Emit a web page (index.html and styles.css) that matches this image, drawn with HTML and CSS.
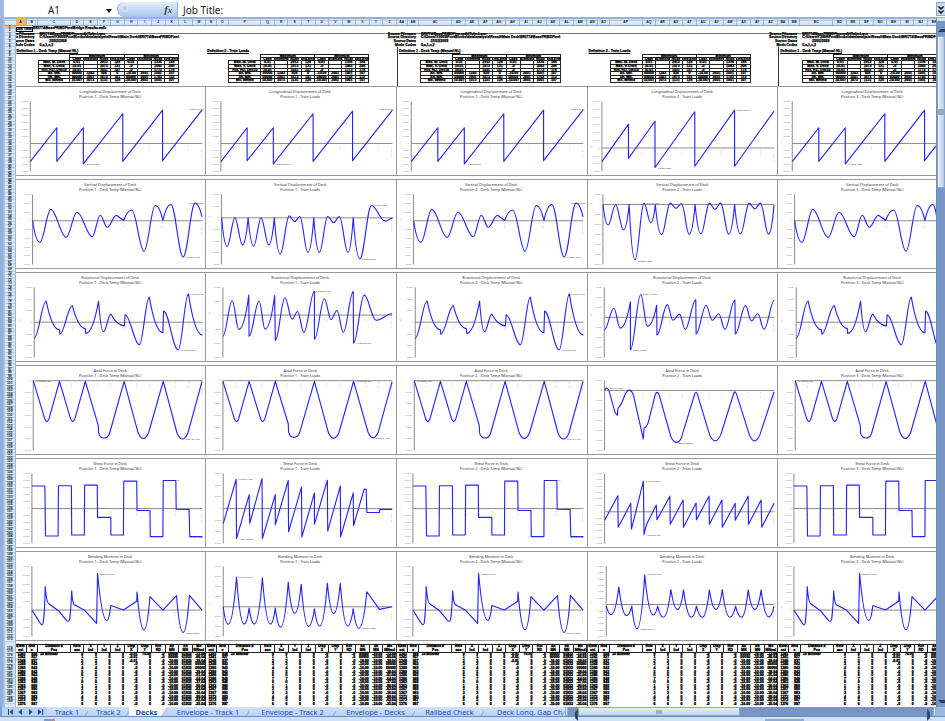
FILE: index.html
```html
<!DOCTYPE html>
<html lang="en">
<head>
  <meta charset="UTF-8">
  <title>Decks</title>
  <link rel="stylesheet" href="styles.css">
</head>
<body>
  <div class="formula-bar">
    <div class="name-box">A1</div>
    <span class="arrow-down"></span>
    <div class="fx-pill"><i class="knob"></i><span class="fx">f<small>x</small></span></div>
    <div class="formula">Job Title:</div>
    <div class="expand">
      <svg width="8" height="10" viewBox="0 0 8 10"><path d="M1.5 1.5 4 4 6.500 1.500M1.500 5.500 4 8 6.500 5.500" fill="none" stroke="#111" stroke-width="1.500"/></svg>
    </div>
  </div>

  <div class="workbook">
    <div class="left-edge"></div>
    <div class="grid">
      <div class="col-heads" id="cols"><div class="corner"></div></div>
      <div class="grid-body">
        <div class="row-heads" id="rows"></div>
        <div class="sheet" id="sheet"></div>
      </div>
    </div>
    <div class="vscroll">
      <div class="split"></div>
      <div class="up"></div>
      <div class="thumb"><i></i></div>
      <div class="track"></div>
      <div class="down"></div>
    </div>
  </div>

  <div class="bottom">
    <div class="nav">
      <svg width="38" height="8" viewBox="0 0 38 8" fill="#1c4a9c">
        <path d="M1 1h1v6H1zM6 1v6L2.500 4zM15 1v6l-3.500-3zM22 1v6l3.500-3zM31 1v6l3.500-3zM35 1h1v6h-1z"/>
      </svg>
    </div>
    <div class="tabs">
      <span class="tab t1">Track 1</span>
      <span class="tab t2">Track 2</span>
      <span class="tab active">Decks</span>
      <span class="tab t4">Envelope - Track 1</span>
      <span class="tab t5">Envelope - Track 2</span>
      <span class="tab t6">Envelope - Decks</span>
      <span class="tab t7">Railbed Check</span>
      <span class="tab t8">Deck Long. Gap Ch</span>
    </div>
    <div class="hscroll">
      <div class="grip"></div>
      <div class="left"></div>
      <div class="thumb"><i></i></div>
      <div class="right"></div>
      <div class="grip"></div>
    </div>
    <div class="corner-fill"></div>
  </div>
  <div class="status">
    <div class="record"></div>
    <div class="views"></div>
  </div>
  <script src="sheet.js"></script>
</body>
</html>
```
FILE: styles.css
```css
* {
  box-sizing: border-box;
}
body {
  --row: 3.577px;
  margin: 0;
  width: 945px;
  height: 721px;
  overflow: hidden;
  background: #fff;
  font-family: "Liberation Sans", Arial, sans-serif;
}

/* formula bar */
.formula-bar {
  display: flex;
  height: 18px;
  padding-top: 2px;
  border-bottom: 1px solid #9db9d8;
  font: 10px/16px "Noto Sans", sans-serif;
  color: #222;
  border-left: 4px solid #9dbbe3;
}
.name-box {
  width: 102px;
  padding-right: 2px;
  text-align: center;
}
.arrow-down {
  width: 6px;
  height: 4px;
  margin: 7px 5px 0 0;
  border: 3px solid transparent;
  border-top: 4px solid #111;
  border-bottom: 0;
}
.fx-pill {
  display: flex;
  justify-content: space-between;
  width: 61px;
  height: 15px;
  padding: 0 5px 0 3px;
  border-radius: 8px 0 0 8px;
  border-left: 1px solid #8fb0dc;
  border-right: 1px solid #8fb0dc;
  background: linear-gradient(#e3eefb, #c4daf5 50%, #a5c4ec);
}
.knob {
  width: 7px;
  height: 7px;
  margin-top: 3px;
  border-radius: 50%;
  background: #c4ccd8;
  border: 1px solid #e8eef6;
}
.fx {
  font: italic bold 11px/14px "Liberation Serif", serif;
  color: #444;
}
.fx small {
  font-size: 8px;
}
.formula {
  flex: 1;
  padding-left: 5px;
}
.expand {
  width: 9px;
  height: 14px;
  padding-top: 2px;
  background: #c5daf4;
  border: 1px solid #89a9d3;
  border-right: 0;
}
.expand svg {
  display: block;
}

/* grid */
.workbook {
  display: flex;
  height: 688.5px;
}
.left-edge {
  width: 5px;
  background: linear-gradient(90deg, #8fb0dd 50%, #b7cfee);
}
.grid {
  width: 931px;
  overflow: hidden;
}
.col-heads {
  display: flex;
  height: 7.7px;
  background: linear-gradient(#8aadd3 0 1px, #dbe9f7 1px 2px, #a9c6e2 2px 3px, #e4eef9 3px, #cbdff3);
  border-bottom: 1px solid #86a8cb;
}
.corner {
  flex: none;
  width: 10.5px;
}
.col-head {
  flex: none;
  padding-top: 2px;
  border-right: 1px solid #9ab8d8;
  font-size: 3.4px;
  font-weight: bold;
  line-height: 5px;
  text-align: center;
  color: #123;
}
.col-head.on,
.row-head.on {
  background: #f7b55a;
}
.grid-body {
  display: flex;
  height: 681px;
}
.row-heads {
  flex: none;
  width: 10.5px;
  background: #d9e7f7;
  border-right: 1px solid #9ab8d8;
}
.row-head {
  height: var(--row);
  border-bottom: 1px solid #b3cdea;
  font-size: 3.3px;
  font-weight: bold;
  line-height: var(--row);
  text-align: center;
  color: #012;
}
.row-head.tall {
  height: 8.4px;
  line-height: 13px;
}
.sheet {
  display: flex;
  width: 920px;
  overflow: hidden;
  background: linear-gradient(#777, #777) 0 7px / 100% 1px no-repeat;
}
.block {
  flex: none;
  width: 190.7px;
}

/* job details and result summary */
.head {
  height: calc(var(--row) * 17);
  font-size: 3.5px;
  font-weight: bold;
  line-height: var(--row);
  white-space: nowrap;
  -webkit-text-stroke: 0.25px #000;
}
.job {
  display: flex;
  height: calc(var(--row) * 2);
  padding-top: 1px;
}
.job b {
  height: 5px;
  border: 1px solid #000;
  line-height: 3px;
}
.info {
  display: grid;
  grid-template-columns: 19px 1fr;
  grid-auto-rows: var(--row);
  column-gap: 5px;
  height: calc(var(--row) * 4);
}
.info span:nth-child(odd) {
  display: flex;
  justify-content: flex-end;
}
.caption {
  height: calc(var(--row) * 2);
  padding: 3px 0 0 1px;
  text-decoration: underline;
}
.ruled .caption {
  border-left: 1px solid #333;
}
.ruled .summary-wrap {
  border-left: 1px solid #333;
}
.summary-wrap {
  height: calc(var(--row) * 9);
  padding-left: 22.3px;
}
.summary {
  display: grid;
  grid-template-columns: 32.7px repeat(8, 13.54px);
  grid-auto-rows: var(--row);
  width: 141.5px;
}
.summary span {
  border-right: 1px solid #222;
  border-bottom: 1px solid #222;
  text-align: center;
}
.summary .group {
  grid-column: span 4;
  border-top: 1px solid #222;
  line-height: 2.5px;
}
.summary .blank {
  border-bottom: 0;
}
.summary .name {
  border-left: 1px solid #222;
}

/* charts */
.chart {
  display: block;
  width: 190.7px;
  height: 89.4px;
  margin-bottom: 3.6px;
  border: 1px solid #999;
  border-left: 0;
}
.chart text {
  font-family: "Noto Sans", sans-serif;
  font-size: 6px;
  fill: #999;
}
.chart .title {
  font-size: 11.5px;
  text-anchor: middle;
  fill: #333;
}
.chart .peak {
  font-size: 6.5px;
  fill: #333;
}
.chart .tick {
  text-anchor: end;
}
.chart .axis {
  stroke: #888;
  stroke-width: 3;
}
.chart .line {
  fill: none;
  stroke: #2424ff;
  stroke-width: 3.4;
  stroke-linejoin: round;
}

/* results */
.results {
  display: grid;
  grid-template-columns: 11px 11.6px 32.7px repeat(10, 13.54px);
  grid-template-rows: 8.4px;
  grid-auto-rows: var(--row);
  font-size: 3.5px;
  font-weight: bold;
  line-height: var(--row);
  text-align: right;
  border-right: 1px solid #444;
  -webkit-text-stroke: 0.3px #000;
}
.results span {
  white-space: nowrap;
  padding-right: 1px;
}
.results .th {
  padding: 0;
  border: 1px solid #222;
  border-left: 0;
  line-height: 3.2px;
  text-align: center;
  white-space: pre;
}
.results .txt {
  text-align: left;
  padding-left: 2px;
}

/* vertical scroll bar */
.vscroll {
  display: flex;
  flex-direction: column;
  width: 9px;
  background: #7796c5;
  border-left: 1px solid #6b8dbd;
}
.vscroll .split {
  height: 3px;
  background: #cfe0f5;
}
.vscroll .up,
.vscroll .down {
  flex: none;
  height: 15px;
  padding: 8px 0 0 1px;
}
.vscroll .up::before,
.vscroll .down::before {
  content: "";
  display: block;
  width: 6px;
  border: 3px solid transparent;
  border-top: 0;
  border-bottom: 3px solid #2f4263;
}
.vscroll .down::before {
  border-bottom: 0;
  border-top: 3px solid #2f4263;
}
.vscroll .thumb {
  display: flex;
  align-items: center;
  height: 152px;
  background: linear-gradient(90deg, #eaf2fc, #b5cae6);
  border: 1px solid #88a5cf;
}
.vscroll .thumb i {
  width: 6px;
  height: 6px;
  background: #9ba9bd;
}
.vscroll .track {
  flex: 1;
}

/* sheet tabs */
.bottom {
  display: flex;
  height: 10.5px;
  background: #b8d1f2;
  border-bottom: 1px solid #6b8fc4;
}
.nav {
  width: 46px;
  padding: 1px 0 0 5px;
  border-left: 2px solid #7ba0d4;
}
.nav svg {
  display: block;
}
.tabs {
  display: flex;
  width: 519px;
  overflow: hidden;
  font: 7.4px/10px "Noto Sans", sans-serif;
  color: #24509b;
  white-space: nowrap;
}
.tab {
  flex: none;
  position: relative;
  text-align: center;
  background: linear-gradient(#cfe1f8, #b9d2f3);
}
.tab::after {
  content: "";
  position: absolute;
  right: 0;
  top: 0;
  width: 1px;
  height: 10px;
  background: #88a9d6;
  transform: skewX(-32deg);
}
.tab.active {
  width: 38px;
  padding-right: 3px;
  background: #fff;
  font-weight: bold;
  clip-path: polygon(0 0, 100% 0, 84% 100%, 0 100%);
}
.t1 { width: 42px; }
.t2 { width: 41px; }
.t4 { width: 82px; }
.t5 { width: 87px; }
.t6 { width: 79px; }
.t7 { width: 69px; }
.t8 { width: 81px; padding-left: 13px; }
.tab.t8 { text-align: left; }

.hscroll {
  display: flex;
  width: 371px;
  background: #7796c5;
}
.hscroll .grip {
  width: 3px;
  background: #dce9fa;
  border: 1px solid #8fadd7;
}
.hscroll .left,
.hscroll .right {
  width: 10px;
  padding: 2px 0 0 4px;
}
.hscroll .left::before,
.hscroll .right::before {
  content: "";
  display: block;
  width: 3px;
  height: 6px;
  border: 3px solid transparent;
  border-left: 0;
  border-right: 3px solid #33486d;
}
.hscroll .right {
  margin-left: auto;
}
.hscroll .right::before {
  border-right: 0;
  border-left: 3px solid #33486d;
}
.hscroll .thumb {
  display: flex;
  justify-content: center;
  width: 162px;
  background: linear-gradient(#e6effa, #c0d2eb);
  border: 1px solid #8aa7d0;
}
.hscroll .thumb i {
  width: 6px;
  height: 4px;
  margin-top: 2px;
  background: #a4b0c2;
}
.corner-fill {
  flex: 1;
  background: #9bb8e0;
}

/* status bar */
.status {
  display: flex;
  justify-content: space-between;
  height: 4px;
  padding: 2px 141px 0 44px;
  background: #cfe1f7;
}
.status .record {
  width: 11px;
  background: linear-gradient(90deg, #7d9cc9 50%, #d88b7a);
}
.status .views {
  width: 39px;
  background: linear-gradient(90deg, #efc16c 13px, #dfeafa 13px);
  border: 1px solid #8fadd7;
}
```
FILE: sheet.js
```js
var COLS = [11, 11.6, 32.7, 13.54, 13.54, 13.54, 13.54, 13.54, 13.54, 13.54, 13.54, 13.54, 13.54];

// Curves use M, L and Q as in SVG, plus three eased segments:
// S flat at both ends, A flat on arrival, D flat on departure.
var TEMP = [
  { title: 'Longitudinal Displacement of Deck', w: 185, o: [47, 9], x: 90, zero: 182, steps: 10, unit: 'm',
    d: 'M90,238 L170,134 L170,237 L250,134 L250,245 L369,91 L369,237 L489,80 L489,235 L608,79',
    peaks: [[258, 249, '-0.005919231'], [570, 81, '0.009478154']] },
  { title: 'Vertical Displacement of Deck', w: 158, o: [47, 287], x: 97, zero: 412, steps: 8, unit: 'm',
    d: 'M97,412 A119,478 S152,377 S198,463 S231,386 S277,461 S301,395 S322,432 S350,395 L372,411 A396,379 S433,505 S467,365 D490,411 A514,362 S551,523 S587,358 D608,400',
    peaks: [[557, 525, '-0.00021E-05'], [570, 360, '0.000105E-05']] },
  { title: 'Rotational Displacement of Deck', w: 174, o: [47, 15], x: 102, zero: 166, steps: 6, unit: 'rad',
    d: 'M102,215 S138,101 A178,189 L179,203 S217,115 A256,185 L257,200 D296,101 A311,195 S333,141 A374,177 L376,143 S419,235 S449,89 A490,198 L492,132 S536,251 S567,79 A609,205',
    peaks: [[543, 253, '-0.77335E-05'], [569, 81, '4.78336E-05']] },
  { title: 'Axial Force in Deck', w: 100, o: [47, 293], x: 99, zero: 338, steps: 6, unit: 'N',
    d: 'M99,338 L133,453 Q140,474 147,453 L178,340 L211,453 Q218,474 225,453 L256,340 L295,475 L296,498 Q300,514 312,514 Q324,514 329,500 L373,340 L415,497 Q431,534 447,497 L491,340 L533,500 Q549,534 565,500 L608,340',
    peaks: [[107, 343, '-0.0002E-05'], [557, 519, '-250136.975']] },
  { title: 'Shear Force in Deck', w: 102, o: [47, 11], x: 95, zero: 163, steps: 10, unit: 'N',
    d: 'M95,94 L134,94 L136,247 L174,247 L175,93 L214,93 L215,244 L253,244 L254,91 L292,91 L293,190 L333,190 L333,244 L371,244 L372,79 L411,79 L412,169 L451,169 L452,249 L490,249 L491,77 L529,77 L530,165 L569,166 L571,249 L609,249',
    peaks: [[497, 80, '398023.0151'], [565, 252, '-40151.02']] },
  { title: 'Bending Moment in Deck', w: 134, o: [47, 290], x: 95, zero: 468, steps: 8, unit: 'Nm',
    d: 'M95,468 L118,505 Q125,520 129,508 Q134,470 135,396 Q139,445 145,448 L175,470 L198,498 Q206,508 209,495 Q213,460 215,409 Q217,447 223,452 L253,468 L290,509 L293,355 A321,500 D333,454 L371,468 L411,441 L412,413 A433,529 D451,427 L490,468 L531,424 A551,537 D570,423 L608,468',
    peaks: [[300, 360, '83092E-0.537'], [557, 540, '-532976.0562']] }
];

var TRAIN1 = [
  { o: [3, 9], x: 48, zero: 182, steps: 10,
    d: 'M48,238 L127,134 L127,235 L206,134 L206,245 L326,91 L326,237 L445,83 L445,235 L565,80',
    peaks: [[213, 249, '-0.005923919'], [526, 81, '0.009399154']] },
  { o: [3, 287], x: 50, zero: 403, steps: 6,
    d: 'M50,403 A67,491 S90,403 S113,486 D130,403 A147,490 S169,403 S192,486 D209,403 A227,514 S254,397 S270,415 S286,399 S310,509 D328,403 A345,509 S370,399 S388,418 S405,399 S431,509 D447,403 A467,529 S502,365 S543,413 S566,404',
    peaks: [[471, 532, '-0.000751525'], [505, 367, '0.000516506']] },
  { o: [619, 15], x: 670, zero: 144, steps: 5,
    d: 'M670,209 S698,100 S718,188 D748,83 L749,209 S779,101 S797,187 D826,84 L828,222 S857,91 S879,157 S895,133 S914,197 S946,71 L946,218 S976,94 S996,158 S1014,130 S1033,197 S1063,72 L1064,230 S1096,83 S1132,160 S1180,140',
    peaks: [[949, 73, '0.00029E-05'], [1072, 232, '-0.00029E-05']] },
  { o: [619, 293], x: 670, zero: 338, steps: 6,
    d: 'M670,340 L704,453 Q711,474 718,453 L749,340 L783,453 Q790,474 797,453 L828,340 L867,470 L868,495 Q872,512 884,512 Q896,512 902,495 L946,340 L988,497 Q1004,532 1020,497 L1064,340 L1108,497 Q1122,530 1138,497 L1180,342',
    peaks: [[1072, 343, '-0.0002E-05'], [1128, 517, '-250036.775']] },
  { o: [619, 11], x: 671, zero: 163, steps: 6,
    d: 'M671,209 L710,73 L711,255 L749,121 L751,208 L788,71 L789,255 L828,120 L828,213 L867,77 L868,234 L907,97 L908,250 L946,115 L946,211 L985,76 L986,232 L1024,94 L1025,250 L1063,115 L1064,215 L1096,103 L1102,104 L1104,175 L1142,175 L1143,166 L1180,166',
    peaks: [[715, 75, '1275679.205'], [717, 259, '-1309125.989']] },
  { o: [619, 290], x: 671, zero: 458, steps: 7,
    d: 'M671,458 A686,512 D711,367 A734,511 D749,462 A765,511 D789,369 A813,511 D828,462 A844,520 D867,383 A887,478 D906,389 A928,518 D946,464 A962,517 D985,386 A1004,479 D1024,386 A1046,517 D1063,464 A1080,524 D1104,412 L1142,466 L1180,458',
    peaks: [[717, 370, '7969697.215'], [1087, 527, '-5037513.806']] }
];

var TRAIN2 = [
  { o: [8, 9], x: 50, zero: 196, steps: 9,
    d: 'M50,238 L130,123 L130,228 L210,114 L210,256 L330,85 L330,252 L450,80 L450,252 L569,83',
    peaks: [[217, 260, '-0.005129084'], [455, 82, '0.009767654']] },
  { o: [8, 287], x: 53, zero: 362, steps: 7,
    d: 'M53,362 A69,425 S91,363 S115,440 D132,362 A150,532 S177,358 S197,418 D211,362 A230,455 S256,358 S273,374 S290,359 S313,454 D331,362 A349,452 S374,358 S391,377 S408,358 S432,453 D450,362 A468,452 S494,358 S511,376 S528,358 S552,453 D569,364',
    peaks: [[157, 537, '-0.002217525'], [177, 361, '0.0742E-05']] },
  { o: [8, 15], x: 57, zero: 151, steps: 7,
    d: 'M57,190 S86,123 S105,184 D136,103 L136,251 S167,81 S187,178 D215,114 L216,205 S247,112 S264,160 S284,141 S301,188 S333,97 L334,202 S364,114 S383,160 S402,140 S421,188 S451,98 L452,202 S483,115 S501,162 S520,140 S539,188 S570,98',
    peaks: [[141, 253, '-0.000163607'], [172, 83, '0.000114075']] },
  { o: [8, 293], x: 58, zero: 368, steps: 7,
    d: 'M58,366 Q66,355 71,368 L90,437 L97,444 L98,423 Q108,415 119,382 Q133,352 145,382 L170,495 L175,517 L177,483 Q185,480 190,465 L211,380 Q216,368 222,380 L258,510 Q273,542 289,515 L330,378 Q334,368 338,380 L375,505 Q392,540 408,505 L448,375 Q452,368 456,380 L495,505 Q510,540 526,505 L569,372',
    peaks: [[71, 365, '150796.0301'], [279, 532, '-5207793.005']] },
  { o: [8, 11], x: 58, zero: 173, steps: 11,
    d: 'M58,199 L98,124 L99,220 L137,147 L139,226 L175,79 L177,243 Q182,215 190,200 L214,152 L216,197 L255,125 L256,211 L295,137 L296,220 L334,146 L335,197 L373,125 L374,211 L412,137 L413,220 L452,147 L452,199 L491,125 L492,211 L530,137 L532,220 L569,147',
    peaks: [[182, 81, '2407975.256'], [183, 247, '-1807725.756']] },
  { o: [8, 290], x: 63, zero: 451, steps: 11,
    d: 'M63,455 A78,482 D101,397 A124,485 D140,456 A156,525 D179,360 A205,483 D218,456 A235,490 D258,405 A278,466 D296,406 A320,490 D335,456 A353,490 D374,406 A394,466 D413,405 A436,490 D453,456 A471,490 D491,406 A511,466 D530,406 A553,489 D569,456',
    peaks: [[164, 530, '-3528602.515'], [184, 362, '4752202.753']] }
];

function curve(spec) {
  var x = 0, y = 0, out = '';
  spec.match(/[A-Z][\d.,\- ]+/g).forEach(function (seg) {
    var n = seg.slice(1).trim().split(/[ ,]+/).map(Number);
    var c = seg[0], px = n[n.length - 2], py = n[n.length - 1];
    var dx = px - x, dy = py - y;
    if (c === 'S') {
      out += 'C' + [x + dx * 0.37, y, px - dx * 0.37, py, px, py];
    } else if (c === 'A') {
      out += 'C' + [x + dx * 0.25, y + dy * 0.55, x + dx * 0.6, py, px, py];
    } else if (c === 'D') {
      out += 'C' + [px - dx * 0.6, y, px - dx * 0.25, py - dy * 0.55, px, py];
    } else {
      out += c + n;
    }
    x = px;
    y = py;
  });
  return out;
}

function chart(c, i, position) {
  var base = TEMP[i];
  var ox = c.o[0], oy = c.o[1];
  var zero = c.zero - oy, ax = c.x - ox, right = 562;
  var top = 44, bottom = 259, t, k;
  var s = '<svg class="chart" viewBox="0 0 572 268" preserveAspectRatio="none">';
  s += '<text class="title" x="284" y="18" textLength="' + base.w + '">' + base.title + '</text>';
  s += '<text class="title" x="284" y="34" textLength="' + (/Temp/.test(position) ? 188 : 120) + '">' + position + '</text>';
  for (k = 0; k <= c.steps; k++) {
    t = top + (bottom - top) * k / c.steps;
    s += '<text class="tick" x="' + (ax - 7) + '" y="' + (t + 2) + '">' + (Math.abs(t - zero) < 5 ? '0' : '0.0000') + '</text>';
  }
  for (k = 1; k < 13; k++) {
    t = ax + (right - ax) * k / 13;
    s += '<text transform="translate(' + t + ' ' + (zero + 24) + ') rotate(-90)">Pier ' + k + '</text>';
  }
  s += '<text transform="translate(' + right + ' ' + (zero + 42) + ') rotate(-90)">Abutment 2</text>';
  s += '<text transform="translate(13 ' + zero + ') rotate(-90)">' + base.unit + '</text>';
  s += '<path class="axis" d="M' + ax + ',' + top + 'V' + bottom + 'M' + ax + ',' + zero + 'H' + right + '"/>';
  s += '<g transform="translate(' + -ox + ' ' + -oy + ')"><path class="line" d="' + curve(c.d) + '"/>';
  c.peaks.forEach(function (p) {
    s += '<text class="peak" x="' + p[0] + '" y="' + p[1] + '" textLength="44">' + p[2] + '</text>';
  });
  return s + '</g></svg>';
}

function cell(text, cls) {
  return '<span' + (cls ? ' class="' + cls + '"' : '') + '>' + text + '</span>';
}

var SUMMARY = [
  ['Max. M. Deck', '0.01', '', '2913', '128', '0.01', '', '1336', '188'],
  ['Max. V. Deck', '10.01', '', '1073', '131', '-0', '', '1083', '208'],
  ['Rot. RD. Dec10', '10.01', '', '1031', '157', '-0', '', '1773', '178'],
  ['Ax. MN.', '00000', '1243', '928', '0', '-10.00', '2601', '1001', '107'],
  ['Sh. MN.', '00000', '1001', '1673', '101', '00000', '2601', '1703', '112'],
  ['Mo. MNmd', '10.007', '1073', '1131', '128', '-10.007', '2601', '1001', '107']
];

function head(n) {
  var train = n % 2 === 1;
  var s = '<div class="head' + (train || n === 0 ? '' : ' ruled') + '"><div class="job">';
  if (n === 0) {
    s += '<b>Job Title:</b>BRI774\\BaseFRIBDFine\\Bridge Results.mdb';
  }
  s += '</div><div class="info">';
  if (!train) {
    s += cell('Source Filename') + cell('BRI774\\BaseFRIBDFine.mdb\\Tulin.Lanc') +
      cell('Source Directory') + cell('C:\\Users\\Y2009\\FootBlocks\\data\\analysis\\Result\\Main Deck\\BRI774\\BaseFRIBDFine\\') +
      cell('Source Dates') + cell('&emsp;&emsp;&ensp; 25/02/2009') +
      cell('Mode Codes') + cell('0,a,1,c,2');
  }
  s += '</div><div class="caption">' + (train ? 'Definition 2 - Train Loads' : 'Definition 1 - Deck Temp (Manual NL)') + '</div>';
  s += '<div class="summary-wrap"><div class="summary">' + cell('', 'blank') + cell('Maximum', 'group') + cell('Minimum', 'group') + cell('');
  ['Case', 'Element', 'Node', 'Ind.End', 'Case', 'Element', 'Node', 'Ind.End'].forEach(function (h) {
    s += cell(h);
  });
  SUMMARY.forEach(function (r) {
    r.forEach(function (v, j) {
      s += cell(v, j ? '' : 'name');
    });
  });
  return s + '</div></div></div>';
}

var NODES = [[1341, 928], [1341, 927], [1348, 937], [1348, 943], [1380, 943], [1380, 943], [1386, 943], [1386, 948],
  [1363, 948], [1363, 980], [1367, 980], [1367, 983], [1373, 983], [1373, 987], [1376, 987]];

function results(n) {
  var s = '<div class="results">';
  ['Elem\nent', 'Nod\ne', 'Distance #\nPos', 'Rele\nase', 'X\nInd', 'Y\nInd', 'Z\nInd', 'Disp\nX', 'Disp\nY', 'Rot\nRD', 'Ax\nMN', 'Sh\nMN', 'Mo\nMNmd'].forEach(function (h) {
    s += cell(h, 'th');
  });
  NODES.forEach(function (p, r) {
    s += cell(p[0]) + cell(p[1]) + cell(r ? '' : '10 Bilinear', 'txt');
    s += cell(r % 8) + cell(r % 8) + cell('0') + cell('0');
    s += cell(r < 3 && n % 2 === 0 ? '-0.01' : '-0') + cell(r === 0 && n % 2 === 0 ? '70.00' : '0') + cell('-0');
    s += cell(r < 2 ? '00000' : '-10.00') + cell(n % 2 ? '-10.00' : '61933') + cell(r === 3 || r === 4 ? '00000' : '-' + (13 + r * 53 % 80) + '.04');
  });
  return s + '</div>';
}

function letters(n) {
  return (n > 25 ? String.fromCharCode(64 + Math.floor(n / 26)) : '') + String.fromCharCode(65 + n % 26);
}

var html = '', i;
for (i = 0; i < 65; i++) {
  html += '<div class="col-head' + (i ? '' : ' on') + '" style="width:' + COLS[i % 13] + 'px">' + letters(i) + '</div>';
}
document.getElementById('cols').insertAdjacentHTML('beforeend', html);

html = '';
for (i = 1; i < 190; i++) {
  html += '<div class="row-head' + (i === 1 ? ' on' : '') + (i === 174 ? ' tall' : '') + '">' + i + '</div>';
}
document.getElementById('rows').innerHTML = html;

var BLOCKS = [
  [TEMP, 'Position 1 - Deck Temp (Manual NL)'],
  [TRAIN1, 'Position 1 - Train Loads'],
  [TEMP, 'Position 2 - Deck Temp (Manual NL)'],
  [TRAIN2, 'Position 2 - Train Loads'],
  [TEMP, 'Position 3 - Deck Temp (Manual NL)']
];
document.getElementById('sheet').innerHTML = BLOCKS.map(function (b, n) {
  return '<div class="block">' + head(n) + b[0].map(function (c, k) {
    return chart(c, k, b[1]);
  }).join('') + results(n) + '</div>';
}).join('');
```
